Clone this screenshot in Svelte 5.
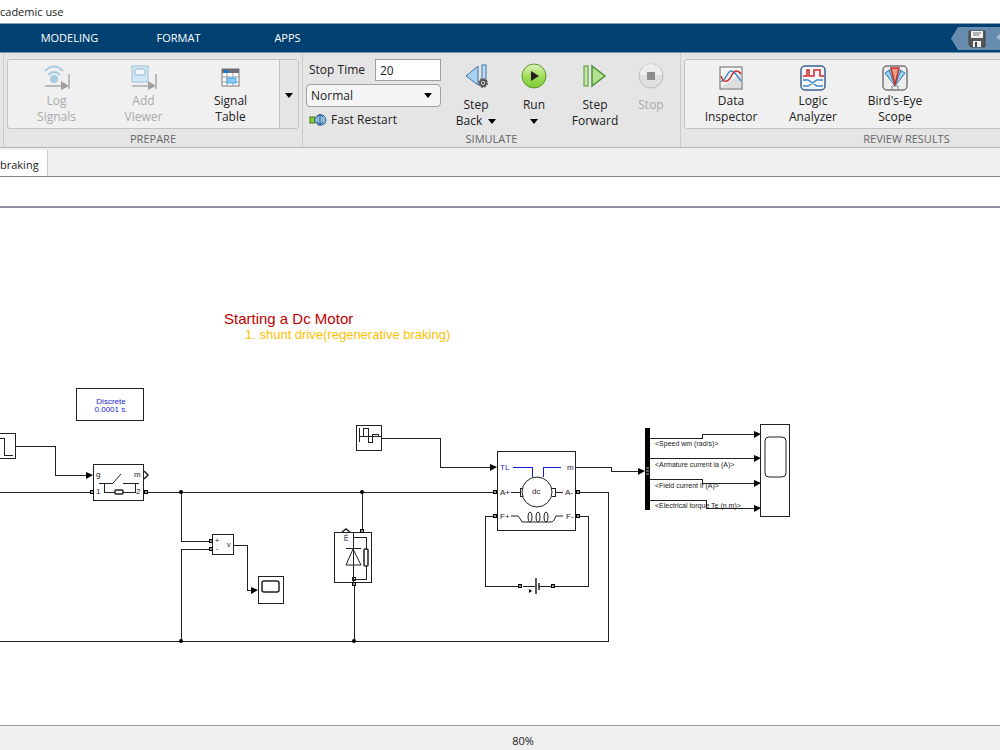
<script>
  let stopTime = "20"
  let mode = "Normal"

  const tabs = ["MODELING", "FORMAT", "APPS"]

  const prepare = [
    { icon: "log", lines: ["Log", "Signals"], disabled: true },
    { icon: "viewer", lines: ["Add", "Viewer"], disabled: true },
    { icon: "table", lines: ["Signal", "Table"] },
  ]

  const review = [
    { icon: "inspector", lines: ["Data", "Inspector"] },
    { icon: "logic", lines: ["Logic", "Analyzer"] },
    { icon: "birdseye", lines: ["Bird's-Eye", "Scope"] },
  ]

  // diagram, in model coordinates
  const wires = [
    "M15 446H55V475H88",
    "M0 492H90",
    "M147 492H494",
    "M181 492V541H209",
    "M209 549H181V641",
    "M234 545H247V590H253",
    "M0 641H608V492H579",
    "M362 492V529",
    "M354 586V641",
    "M382 438H440V467H492",
    "M494 516H485V586H518",
    "M555 586H588V516H579",
    "M575 467H611V471H640",
    "M650 438H702V434H756",
    "M650 458H756",
    "M650 479H702V483H756",
    "M650 500H706V508H756",
  ]

  const arrows = [
    [93, 475],
    [258, 590],
    [497, 467],
    [645, 471],
    [761, 434],
    [761, 458],
    [761, 483],
    [761, 508],
  ]

  const junctions = [
    [181, 492],
    [362, 492],
    [181, 641],
    [354, 641],
  ]

  const ports = [
    [92, 492],
    [146, 492],
    [211, 541],
    [211, 549],
    [362, 531],
    [354, 584],
    [495, 492],
    [578, 492],
    [495, 516],
    [578, 516],
    [520, 586],
    [553, 586],
  ]

  const blocks = [
    [76, 388, 67, 32],
    [-12, 433, 27, 25],
    [93, 464, 50, 36],
    [212, 534, 21, 20],
    [258, 576, 25, 27],
    [334, 532, 37, 50],
    [356, 425, 25, 25],
    [497, 451, 78, 79],
    [760, 424, 29, 92],
  ]

  const signals = [
    { y: 446, name: "<Speed wm (rad/s)>" },
    { y: 467, name: "<Armature current ia (A)>" },
    { y: 488, name: "<Field current if (A)>" },
    { y: 508, name: "<Electrical torque Te (n m)>" },
  ]
</script>

{#snippet glyph(name)}
  {#if name == "log"}
    <svg width="26" height="26" viewBox="0 0 26 26" fill="none">
      <path d="M1 6Q10 -3 19 6M4 10Q10 4 16 10" stroke="#a9cbe2" stroke-width="2" />
      <circle cx="10" cy="14" r="4" fill="#a9cbe2" />
      <path d="M1 21H18M25 9V24" stroke="#a9a9a9" stroke-width="1.5" />
      <path d="M17 16V25L25 21Z" fill="#a0a0a0" />
    </svg>
  {:else if name == "viewer"}
    <svg width="26" height="26" viewBox="0 0 26 26" fill="none">
      <rect x="1" y="1" width="16" height="16" fill="#d2e6f3" stroke="#a0bfd4" />
      <rect x="4" y="4" width="10" height="6" rx="1" fill="#eef6fb" stroke="#90b9d6" />
      <path d="M1 21H18M25 9V24" stroke="#a9a9a9" stroke-width="1.5" />
      <path d="M17 16V25L25 21Z" fill="#a0a0a0" />
    </svg>
  {:else if name == "table"}
    <svg width="20" height="20" viewBox="0 0 20 20" fill="none">
      <rect x="1" y="1" width="17" height="17" fill="#fff" stroke="#777" />
      <rect x="1" y="1" width="17" height="4" fill="#6c7076" />
      <rect x="3" y="2" width="4" height="3" fill="#1479d2" />
      <path d="M1 9H18M1 14H18M6 5V18M12 5V18" stroke="#999" />
      <rect x="6" y="10" width="9" height="5" fill="#83cdfa" stroke="#4aa5e0" />
    </svg>
  {:else if name == "inspector"}
    <svg width="24" height="24" viewBox="0 0 24 24" fill="none">
      <rect x="1" y="1" width="22" height="22" fill="#f5f5f5" stroke="#666" />
      <path d="M2 21L22 8V22H2Z" fill="#ddd" />
      <path d="M2 15C6 17 8 5 12 5S18 10 22 15" stroke="#3b87c2" stroke-width="1.5" />
      <path d="M2 10C4 15 5 16 8 15C12 14 13 5 17 5Q20 5 22 8" stroke="#c9302f" stroke-width="1.5" />
    </svg>
  {:else if name == "logic"}
    <svg width="26" height="26" viewBox="0 0 26 26" fill="none">
      <rect x="1" y="1" width="24" height="24" rx="4" fill="#f3f5f8" stroke="#3c6093" stroke-width="1.5" />
      <path d="M3 11H7V5H9V11H14V5H20V11H24" stroke="#d02a2a" stroke-width="1.5" />
      <path d="M3 15H8L17 21H23M3 21H8L17 15H23" stroke="#3d8aca" stroke-width="1.5" />
    </svg>
  {:else if name == "birdseye"}
    <svg width="26" height="26" viewBox="0 0 26 26" fill="none">
      <rect x="1" y="1" width="24" height="24" rx="4" fill="#eee" stroke="#777" stroke-width="1.5" />
      <path d="M13 21L3 8Q12 0 23 8Z" fill="#9ed4f3" stroke="#3379a9" />
      <path d="M13 20L7 5M13 20L19 5" stroke="#3379a9" />
      <path d="M9 3H17L13 20Z" fill="#e89e83" stroke="#c9302f" stroke-width="1.5" />
      <path d="M10 24V21H16V24" stroke="#888" />
    </svg>
  {/if}
{/snippet}

<div class="app">
  <header class="titlebar">cademic use</header>

  <nav class="tabbar">
    {#each tabs as tab}
      <button class="tab">{tab}</button>
    {/each}
    <div class="quick">
      <button aria-label="Save">
        <svg width="18" height="18" viewBox="0 0 18 18" fill="none">
          <path d="M1 1H17V17H3L1 15Z" fill="#555" stroke="#444" />
          <rect x="3" y="1" width="12" height="7" fill="#eee" />
          <path d="M5 3H13M5 5H11" stroke="#777" />
          <rect x="5" y="11" width="8" height="6" fill="#eee" />
          <rect x="7" y="12" width="2" height="5" fill="#444" />
        </svg>
      </button>
      <button aria-label="Undo">
        <svg width="18" height="18" viewBox="0 0 18 18"><path d="M1 7L7 2V5Q15 5 15 14Q12 9 7 9V12Z" fill="#9fb9d1" /></svg>
      </button>
    </div>
  </nav>

  <div class="ribbon">
    <section class="group prepare">
      <div class="gallery">
        <div class="items">
          {#each prepare as item}
            <button class="tool" disabled={item.disabled}>
              <span class="icon">{@render glyph(item.icon)}</span>
              {#each item.lines as line}<span>{line}</span>{/each}
            </button>
          {/each}
        </div>
        <button class="more" aria-label="More prepare tools"><span class="caret"></span></button>
      </div>
      <h2>PREPARE</h2>
    </section>

    <section class="group simulate">
      <div class="controls">
        <div class="fields">
          <div class="stop-time">
            <label for="stop-time">Stop Time</label>
            <input id="stop-time" type="text" bind:value={stopTime} />
          </div>
          <div class="mode">
            <select aria-label="Simulation mode" bind:value={mode}>
              <option>Normal</option>
              <option>Accelerator</option>
              <option>Rapid Accelerator</option>
            </select>
            <span class="caret"></span>
          </div>
          <button class="restart">
            <svg width="18" height="14" viewBox="0 0 18 14" fill="none">
              <rect x="1" y="4" width="5" height="6" fill="#8bd02f" stroke="#3c7a1b" />
              <path d="M5 7L9 2H14Q17 4 17 7Q17 11 13 12H9Z" fill="#8eb9df" stroke="#376897" />
              <path d="M11 1V13M8 4L11 1L14 4M8 9L11 12L14 9" stroke="#2b5f93" />
            </svg>
            Fast Restart
          </button>
        </div>

        <button class="tool run-tool">
          <span class="icon">
            <svg width="26" height="26" viewBox="0 0 26 26" fill="none">
              <path d="M3 13L15 3V22Z" fill="#a9d0ee" stroke="#3c76a8" />
              <rect x="19" y="2" width="4" height="17" fill="#c3def2" stroke="#3c76a8" />
              <circle cx="20" cy="20" r="3" fill="#ddd" stroke="#555" stroke-width="2" />
              <circle cx="20" cy="20" r="4.5" stroke="#555" stroke-dasharray="2 1.5" />
              <circle cx="20" cy="20" r="1" fill="#222" />
            </svg>
          </span>
          <span>Step</span>
          <span class="with-caret">Back <span class="caret"></span></span>
        </button>
        <button class="tool run-tool">
          <span class="icon">
            <svg width="26" height="26" viewBox="0 0 26 26">
              <defs>
                <linearGradient id="run" x1="0" y1="0" x2="0" y2="1">
                  <stop offset="0" stop-color="#dff3bf" />
                  <stop offset="0.5" stop-color="#a3dd5c" />
                  <stop offset="1" stop-color="#7cc832" />
                </linearGradient>
              </defs>
              <circle cx="13" cy="13" r="12" fill="url(#run)" stroke="#5f9631" />
              <path d="M10 8V18L18 13Z" fill="#222" />
            </svg>
          </span>
          <span>Run</span>
          <span class="with-caret"><span class="caret"></span></span>
        </button>
        <button class="tool run-tool wide">
          <span class="icon">
            <svg width="26" height="26" viewBox="0 0 26 26" fill="none">
              <rect x="2" y="3" width="4" height="20" fill="#c5e8a5" stroke="#4d923a" />
              <path d="M10 3V23L23 13Z" fill="#b5e08b" stroke="#4d923a" stroke-width="1.5" />
            </svg>
          </span>
          <span>Step</span>
          <span>Forward</span>
        </button>
        <button class="tool run-tool narrow" disabled>
          <span class="icon">
            <svg width="26" height="26" viewBox="0 0 26 26">
              <circle cx="13" cy="13" r="12" fill="#dfdfdf" stroke="#bdbdbd" />
              <path d="M2 12A11 11 0 0 1 24 12Z" fill="#ededed" />
              <rect x="9" y="9" width="8" height="8" fill="#8d8d8d" />
            </svg>
          </span>
          <span>Stop</span>
        </button>
      </div>
      <h2>SIMULATE</h2>
    </section>

    <section class="group review">
      <div class="gallery">
        <div class="items">
          {#each review as item}
            <button class="tool">
              <span class="icon">{@render glyph(item.icon)}</span>
              {#each item.lines as line}<span>{line}</span>{/each}
            </button>
          {/each}
        </div>
      </div>
      <h2>REVIEW RESULTS</h2>
    </section>
  </div>

  <div class="documents">
    <button class="document">braking</button>
  </div>
  <div class="breadcrumb"></div>

  <main class="canvas">
    <svg class="model" role="img" aria-label="Block diagram">
      <g transform="translate(0 -208)">
        <text class="heading" x="224" y="324">Starting a Dc Motor</text>
        <text class="note" x="245" y="339">1. shunt drive(regenerative braking)</text>

        {#each wires as d}
          <path class="wire" {d} />
        {/each}
        {#each blocks as [x, y, width, height]}
          <rect class="block" {x} {y} {width} {height} />
        {/each}
        {#each arrows as [x, y]}
          <path d="M{x} {y}l-7 -3v7z" />
        {/each}
        {#each junctions as [x, y]}
          <circle cx={x} cy={y} r="2" />
        {/each}
        {#each ports as [x, y]}
          <rect class="port" x={x - 2} y={y - 2} width="3" height="3" />
        {/each}

        <g class="blue" text-anchor="middle">
          <text x="111" y="404">Discrete</text>
          <text x="111" y="412">0.0001 s.</text>
        </g>

        <!-- step source -->
        <path class="ink" d="M0 438H4V455H13" />

        <!-- breaker -->
        <text x="96" y="477">g</text>
        <text x="134" y="477">m</text>
        <text x="96" y="494">1</text>
        <text x="136" y="494">2</text>
        <path class="ink" d="M99 483H113M123 483H139M104 483V492H115M123 492H135V483" />
        <path class="coil" d="M113 483L121 474" />
        <rect class="chevron" x="115" y="490" width="8" height="4" rx="1" />
        <path class="chevron" d="M144 471L148 475L144 479" />

        <!-- voltage measurement and scope -->
        <text class="small" x="215" y="543">+</text>
        <text class="small" x="216" y="551">-</text>
        <text class="small" x="227" y="547">v</text>
        <rect class="chevron" x="262" y="581" width="17" height="11" rx="2" />

        <!-- diode -->
        <path class="ink" d="M353 532V582M346 548H361M353 537H366V549M366 566V579H353M358 537H363" />
        <path class="coil" d="M353 549L346 565H361Z" />
        <rect class="chevron" x="364" y="549" width="4" height="17" rx="1" />
        <rect class="ink" x="352" y="577" width="3" height="3" />
        <path class="chevron" d="M342 532L346 529L350 532" />
        <text transform="translate(348 541) rotate(-90)">m</text>

        <!-- load torque source -->
        <path class="ink" d="M359 428V442M359 436H382M363 436V428H368V442H372V434H378V436" />

        <!-- dc machine -->
        <text class="blue" x="500" y="470">TL</text>
        <path class="blue-line" d="M513 467H532V477M543 477V467H561" />
        <text x="567" y="470">m</text>
        <text x="500" y="495">A+</text>
        <text x="565" y="495">A-</text>
        <text x="500" y="519">F+</text>
        <text x="566" y="519">F-</text>
        <circle class="rotor" cx="537" cy="492" r="15" />
        <text x="532" y="494">dc</text>
        <path class="ink" d="M511 492H520M555 492H563M523 488H520V496H523M552 488H555V496H552" />
        <path class="coil" d="M511 516H518L521 520Q521 522 523 522H551Q553 522 554 520L556 516H563" />
        {#each [530, 538, 546] as x}
          <ellipse class="coil" cx={x} cy="517" rx="2" ry="5" />
        {/each}

        <!-- field supply -->
        <path class="ink" d="M523 586H535M539 586H551" />
        <path class="chevron" d="M536 578V594M539 583V590" />
        <path d="M529 589L532 591L529 593Z" />

        <!-- bus selector -->
        <rect x="645" y="428" width="5" height="82" />
        <path d="M646 468H649M646 471H649M646 474H649" stroke="#bbb" />
        {#each signals as signal}
          <text class="small" x="655" y={signal.y}>{signal.name}</text>
        {/each}
        <rect class="screen" x="765" y="437" width="21" height="40" rx="4" />
      </g>
    </svg>
  </main>

  <footer class="status">80%</footer>
</div>

<style>
  :global(body) {
    margin: 0;
  }

  .app {
    display: flex;
    flex-direction: column;
    min-height: 100vh;
    overflow: hidden;
    background: #fff;
    color: #222;
    font: 12px/16px "Open Sans", "Noto Sans", sans-serif;
  }

  button,
  input,
  select {
    font: inherit;
    color: inherit;
  }

  button {
    padding: 0;
    border: 0;
    background: none;
  }

  svg {
    display: block;
  }

  .titlebar {
    height: 23px;
    line-height: 24px;
    font-size: 11px;
    border-bottom: 1px solid #8aa3b8;
  }

  .tabbar {
    display: flex;
    height: 28px;
    padding-left: 15px;
    background: #004172;
    border-bottom: 1px solid #6f94b2;
  }

  .tab {
    width: 109px;
    color: #fff;
    font-size: 11px;
    font-weight: 500;
  }

  .quick {
    display: flex;
    align-items: center;
    gap: 9px;
    box-sizing: border-box;
    flex: none;
    width: 49px;
    height: 23px;
    margin: 3px 0 0 auto;
    padding-left: 17px;
    overflow: hidden;
    background: #668cae;
    clip-path: polygon(0 50%, 7px 0, 100% 0, 100% 100%, 7px 100%);
  }

  .ribbon {
    display: flex;
    height: 94px;
    padding-left: 3px;
    overflow: hidden;
    background: #e5e5e5;
    border-bottom: 1px solid #b5b5b5;
  }

  .group {
    display: flex;
    flex: none;
    flex-direction: column;
    box-sizing: border-box;
    padding: 6px 3px 0;
    border-left: 1px solid #cbcbcb;
  }

  .prepare {
    width: 299px;
  }

  .simulate {
    width: 378px;
  }

  .review {
    width: 452px;
  }

  h2 {
    margin: 2px 0 0;
    color: #666;
    font-size: 11px;
    font-weight: 400;
    line-height: 16px;
    text-align: center;
  }

  .gallery {
    display: flex;
    box-sizing: border-box;
    height: 70px;
    background: #f0f0f0;
    border: 1px solid #c2c2c2;
    border-radius: 3px;
  }

  .items {
    display: flex;
    flex: 1;
    padding: 0 5px;
  }

  .prepare .tool {
    flex: 1;
  }

  .review .tool {
    width: 82px;
  }

  .tool {
    display: flex;
    flex-direction: column;
    align-items: center;
    justify-content: flex-start;
    white-space: nowrap;
  }

  .tool:disabled {
    color: #aaa;
  }

  .icon {
    display: flex;
    align-items: center;
    justify-content: center;
    height: 26px;
    margin: 5px 0 2px;
  }

  .run-tool {
    width: 58px;
  }

  .run-tool .icon {
    margin: 4px 0 8px;
  }

  .wide {
    width: 64px;
  }

  .narrow {
    width: 48px;
  }

  .more {
    width: 19px;
    background: #e5e5e5;
    border-left: 1px solid #c2c2c2;
  }

  .caret {
    display: inline-block;
    border: 4px solid transparent;
    border-top: 5px solid #000;
    border-bottom: 0;
  }

  .with-caret {
    display: flex;
    align-items: center;
    gap: 6px;
    height: 16px;
  }

  .controls {
    display: flex;
    height: 70px;
  }

  .fields {
    display: flex;
    flex-direction: column;
    gap: 3px;
    width: 135px;
    margin-right: 6px;
  }

  .stop-time {
    display: flex;
    align-items: center;
    justify-content: space-between;
    padding-left: 3px;
  }

  .stop-time input {
    box-sizing: border-box;
    width: 66px;
    height: 22px;
    padding: 0 4px;
    background: #fff;
    border: 1px solid #a0a0a0;
  }

  .mode {
    display: grid;
    align-items: center;
  }

  .mode select,
  .mode .caret {
    grid-area: 1 / 1;
  }

  .mode select {
    box-sizing: border-box;
    width: 100%;
    height: 23px;
    padding: 0 4px;
    appearance: none;
    background: #f5f5f5;
    border: 1px solid #a0a0a0;
    border-radius: 4px;
  }

  .mode .caret {
    justify-self: end;
    margin-right: 9px;
    pointer-events: none;
  }

  .restart {
    display: flex;
    align-items: center;
    gap: 4px;
    height: 20px;
    padding-left: 3px;
  }

  .documents {
    display: flex;
    align-items: flex-end;
    height: 28px;
    background: #f0f0f0;
    border-bottom: 1px solid #858b94;
  }

  .document {
    width: 48px;
    height: 26px;
    padding-top: 3px;
    text-align: left;
    font-size: 11px;
    background: #fff;
    border-right: 1px solid #ccc;
  }

  .breadcrumb {
    height: 29px;
    border-bottom: 2px solid #8b919e;
  }

  .canvas {
    display: flex;
    flex: 1;
    min-height: 460px;
  }

  .status {
    height: 24px;
    padding-left: 46px;
    line-height: 29px;
    font-size: 11px;
    text-align: center;
    background: #efefef;
    border-top: 1px solid #9a9fa6;
  }

  .model {
    flex: 1;
    align-self: stretch;
  }

  .model text {
    font: 8px "Liberation Sans", Arial, sans-serif;
    fill: #222;
  }

  .model .heading {
    font-size: 15px;
    fill: #c00000;
  }

  .model .note {
    font-size: 13px;
    fill: #ffc000;
  }

  .model .small {
    font-size: 7px;
  }

  .model .blue,
  .model .blue text {
    fill: #1a1ad6;
  }

  .wire,
  .block,
  .port,
  .ink {
    fill: none;
    stroke: #222;
    shape-rendering: crispEdges;
  }

  .port {
    fill: #999;
    stroke: #000;
  }

  .rotor,
  .coil,
  .chevron,
  .screen {
    fill: none;
    stroke: #222;
  }

  .chevron {
    stroke-width: 1.5px;
  }

  .blue-line {
    fill: none;
    stroke: #1a1ad6;
    shape-rendering: crispEdges;
  }
</style>
